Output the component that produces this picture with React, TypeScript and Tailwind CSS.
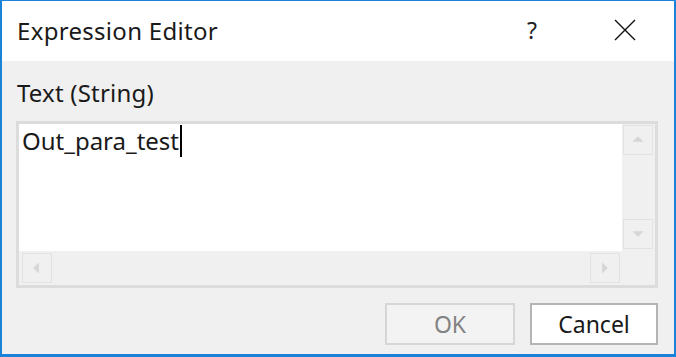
import React from 'react';

function ScrollButton({ dir }: { dir: 'up' | 'down' | 'left' | 'right' }) {
  const points = {
    up: '9,17 15,11 21,17',
    down: '9,12 15,18 21,12',
    left: '17,9 11,15 17,21',
    right: '12,9 18,15 12,21',
  }[dir];
  return (
    <div className="w-[30px] h-[30px] border border-[#e2e2e2] bg-[#f0f0f0] flex items-center justify-center">
      <svg width="30" height="30" viewBox="0 0 30 30" className="block">
        <polygon points={points} fill="#d6d6d6" />
      </svg>
    </div>
  );
}

export default function App() {
  return (
    <div className="w-[676px] h-[357px] bg-[#f0f0f0] border-t border-l-2 border-r-2 border-b-[3px] border-[#1a82d8] flex flex-col font-['Noto_Sans',sans-serif]">
      {/* Title bar */}
      <div className="h-[60px] bg-white flex items-center pl-[15px] shrink-0">
        <span className="text-[24px] text-[#1a1a1a] leading-none tracking-[0.3px]">Expression Editor</span>
        <span className="ml-auto text-[23px] text-[#222] leading-none -mt-[2px] mr-[77px]">?</span>
        <svg width="22" height="22" viewBox="0 0 22 22" className="mr-[38px] -mt-[2px]">
          <path d="M1 1 L21 21 M21 1 L1 21" stroke="#111" strokeWidth="1.4" fill="none" />
        </svg>
      </div>

      {/* Body */}
      <div className="flex flex-col flex-1">
        <div className="mt-[19px] h-[26px] leading-[26px] pl-[15px] text-[24px] text-[#1a1a1a] tracking-[0.2px]">Text (String)</div>

        <div className="mt-[15px] ml-[14px] w-[642px] h-[167px] border-[3px] border-[#dcdcdc] grid grid-cols-[1fr_33px] grid-rows-[1fr_34px]">
          <div className="bg-white pl-[3px] pt-[3px] flex items-start">
            <span className="text-[24px] text-[#1a1a1a] leading-[28px]">Out_para_test</span>
            <span className="inline-block w-[2px] h-[32px] bg-black -mt-[2px] ml-[1px]" />
          </div>
          <div className="bg-[#f0f0f0] pt-[1px] pl-[1px] pr-[2px] pb-[2px] flex flex-col justify-between">
            <ScrollButton dir="up" />
            <ScrollButton dir="down" />
          </div>
          <div className="bg-[#f0f0f0] pl-[3px] pr-[2px] pt-[2px] pb-[1px] flex justify-between">
            <ScrollButton dir="left" />
            <ScrollButton dir="right" />
          </div>
          <div className="bg-[#f0f0f0]" />
        </div>

        <div className="mt-[15px] flex justify-end gap-[15px] pr-[16px]">
          <button className="w-[130px] h-[42px] border-2 border-[#d6d6d6] bg-[#f3f3f3] text-[23px] text-[#838383] flex items-center justify-center">
            OK
          </button>
          <button className="w-[128px] h-[42px] border-2 border-[#b4b4b4] bg-white text-[23px] text-[#1a1a1a] flex items-center justify-center">
            Cancel
          </button>
        </div>
      </div>
    </div>
  );
}
